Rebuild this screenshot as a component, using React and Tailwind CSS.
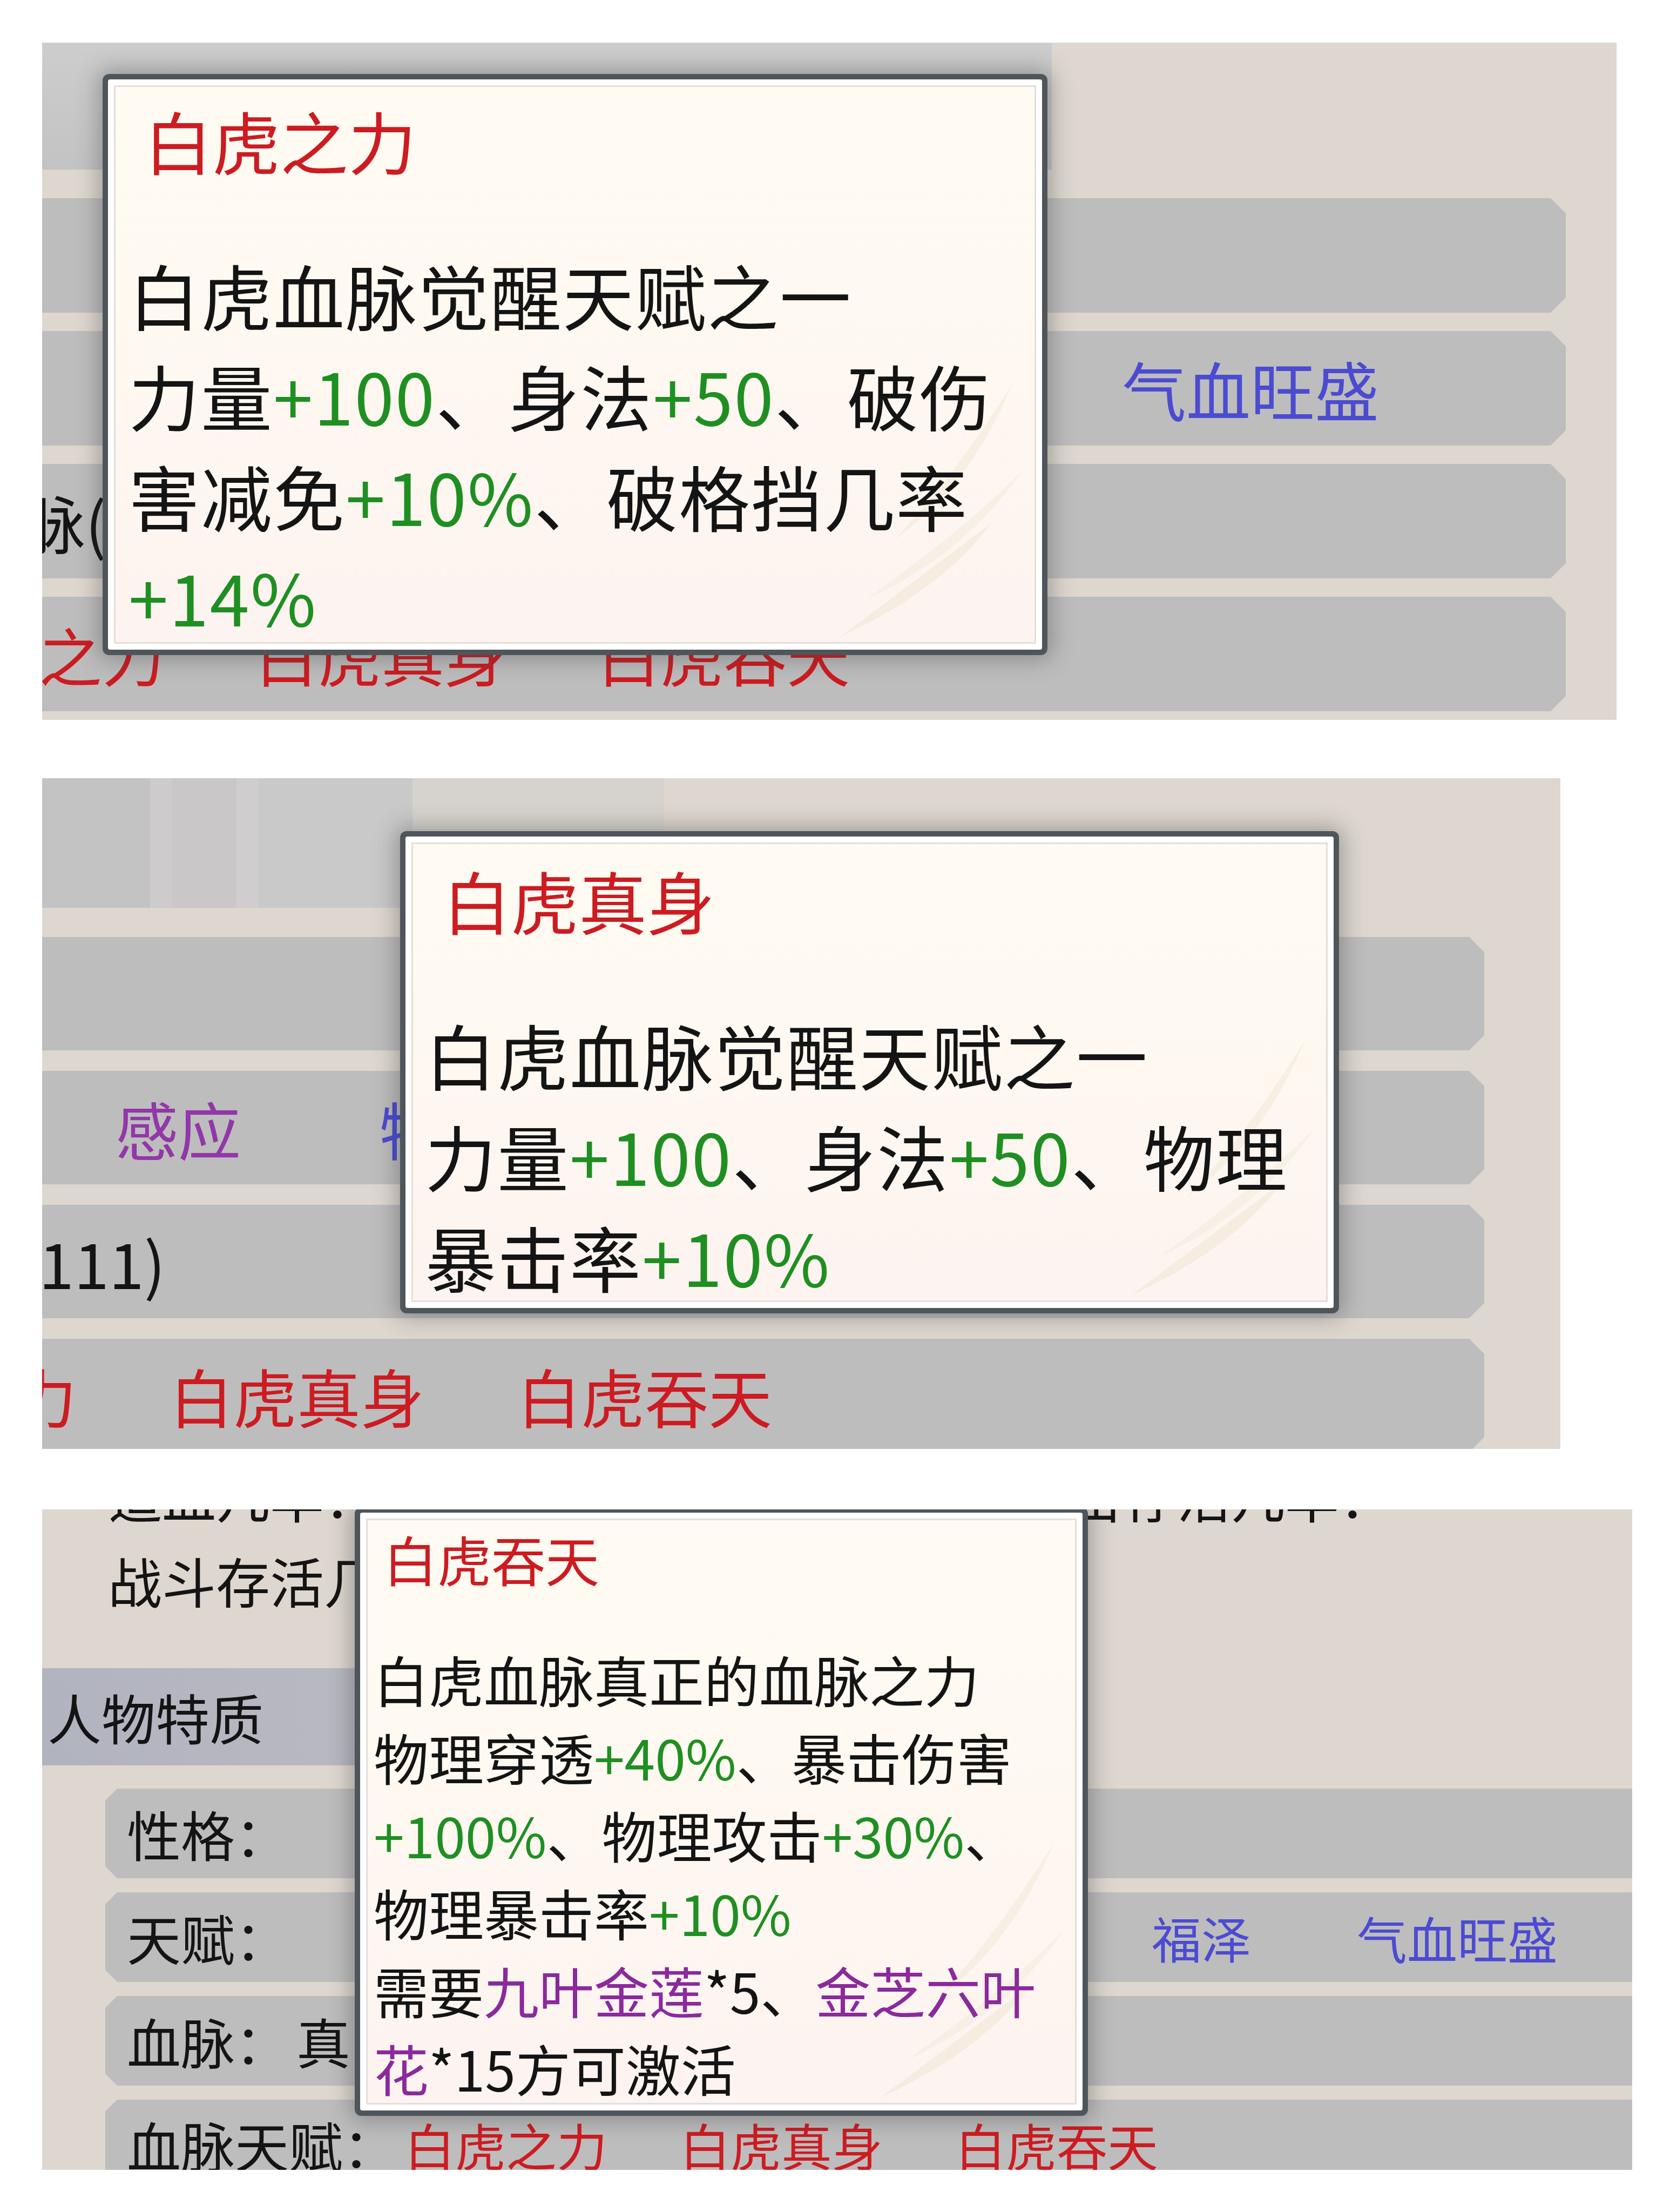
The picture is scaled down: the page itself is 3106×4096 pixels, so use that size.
import React from "react";

const G = ({ children }) => <span className="text-[#1f8f22]">{children}</span>;
const P = ({ children }) => <span className="text-[#8a2a9c]">{children}</span>;

const chamferRight =
  "[clip-path:polygon(0_0,calc(100%_-_28px)_0,100%_28px,100%_calc(100%_-_28px),calc(100%_-_28px)_100%,0_100%)]";
const chamferBoth =
  "[clip-path:polygon(22px_0,calc(100%_-_22px)_0,100%_22px,100%_calc(100%_-_22px),calc(100%_-_22px)_100%,22px_100%,0_calc(100%_-_22px),0_22px)]";

function Leaves() {
  // faint bamboo watermark in the lower right of the tooltip
  return (
    <svg className="absolute bottom-0 right-0 h-[520px] w-[560px] opacity-60" viewBox="0 0 560 520" fill="none">
      <path d="M520 40 C470 160 400 260 300 330 C380 250 450 150 520 40 Z" fill="#f2ebd9" />
      <path d="M540 200 C470 300 380 380 250 440 C360 360 450 290 540 200 Z" fill="#f3edde" />
      <path d="M480 300 C420 380 330 450 200 510 C320 420 400 360 480 300 Z" fill="#f1e9d6" />
    </svg>
  );
}

function Tooltip({ pos, title, titleCls, bodyCls, children }) {
  return (
    <div className={`absolute rounded-[12px] bg-[#4f565b] p-[10px] shadow-[0_0_40px_8px_rgba(50,50,50,0.35)] ${pos}`}>
      <div className="h-full w-full rounded-[4px] bg-white p-[11px]">
        <div className="relative h-full w-full overflow-hidden border-[3px] border-[#e3ded9] bg-gradient-to-b from-[#fffbf2] via-[#fef8f1] to-[#fdf3f0]">
          <Leaves />
          <div className={`relative whitespace-nowrap text-[#cc1c22] ${titleCls}`}>{title}</div>
          <div className={`relative whitespace-nowrap text-[#141414] ${bodyCls}`}>{children}</div>
        </div>
      </div>
    </div>
  );
}

function PanelOne() {
  return (
    <div className="relative h-[1254px] w-[2916px] overflow-hidden bg-[#ddd7cf]">
      <div className="flex h-[235px]">
        <div className="w-[1870px] bg-gradient-to-b from-[#cdcdcd] to-[#c3c3c3]" />
      </div>
      <div className="mt-[53px] flex flex-col gap-[34px]">
        <div className={`h-[212px] w-[2822px] bg-[#bdbdbd] ${chamferRight}`} />
        <div className={`flex h-[212px] w-[2822px] items-center bg-[#bdbdbd] pl-[2000px] ${chamferRight}`}>
          <span className="text-[119px] leading-none text-[#4b4bd2]">气血旺盛</span>
        </div>
        <div className={`flex h-[212px] w-[2822px] items-center bg-[#bdbdbd] ${chamferRight}`}>
          <span className="ml-[-152px] text-[116px] leading-none text-[#141414]">血脉(</span>
        </div>
        <div className={`flex h-[212px] w-[2822px] items-center gap-[166px] bg-[#bdbdbd] text-[117px] leading-none text-[#cc1c22] ${chamferRight}`}>
          <span className="ml-[-240px]">白虎之力</span>
          <span>白虎真身</span>
          <span>白虎吞天</span>
        </div>
      </div>

      <Tooltip
        pos="left-[112px] top-[58px] h-[1076px] w-[1750px]"
        title="白虎之力"
        titleCls="pl-[53px] text-[126px] leading-[196px]"
        bodyCls="mt-[95px] pl-[24px] text-[132px] leading-[186px] tracking-[2px]"
      >
        <div>白虎血脉觉醒天赋之一</div>
        <div>
          力量<G>+100</G>、身法<G>+50</G>、破伤
        </div>
        <div>
          害减免<G>+10%</G>、破格挡几率
        </div>
        <div>
          <G>+14%</G>
        </div>
      </Tooltip>
    </div>
  );
}

function PanelTwo() {
  return (
    <div className="relative mt-[108px] h-[1242px] w-[2812px] overflow-hidden bg-[#ddd7cf]">
      <div className="flex h-[240px]">
        <div className="flex w-[686px] bg-[#c6c5c6]">
          <div className="w-[200px] bg-[#c3c3c4]" />
          <div className="w-[40px] bg-[#cdcbcb]" />
          <div className="w-[120px] bg-[#c9c7c8]" />
          <div className="w-[40px] bg-[#cfcdcd]" />
          <div className="w-[286px] bg-[#cac9ca]" />
        </div>
        <div className="w-[466px] bg-[#d6d3cf]" />
      </div>
      <div className="mt-[54px] flex flex-col gap-[38px]">
        <div className={`h-[210px] w-[2671px] bg-[#bdbdbd] ${chamferRight}`} />
        <div className={`flex h-[210px] w-[2671px] items-center bg-[#bdbdbd] text-[116px] leading-none ${chamferRight}`}>
          <span className="ml-[136px] text-[#9237a8]">感应</span>
          <span className="ml-[256px] text-[#4b4bd2]">特质</span>
        </div>
        <div className={`flex h-[210px] w-[2671px] items-center bg-[#bdbdbd] ${chamferRight}`}>
          <span className="ml-[-6px] text-[117px] leading-none text-[#141414]">111)</span>
        </div>
        <div className={`flex h-[210px] w-[2671px] items-center gap-[172px] bg-[#bdbdbd] text-[118px] leading-none text-[#cc1c22] ${chamferRight}`}>
          <span className="ml-[-408px]">白虎之力</span>
          <span>白虎真身</span>
          <span>白虎吞天</span>
        </div>
      </div>

      <Tooltip
        pos="left-[663px] top-[98px] h-[893px] w-[1739px]"
        title="白虎真身"
        titleCls="pl-[55px] text-[126px] leading-[206px]"
        bodyCls="mt-[89px] pl-[22px] text-[132px] leading-[187px] tracking-[2px]"
      >
        <div>白虎血脉觉醒天赋之一</div>
        <div>
          力量<G>+100</G>、身法<G>+50</G>、物理
        </div>
        <div>
          暴击率<G>+10%</G>
        </div>
      </Tooltip>
    </div>
  );
}

function PanelThree() {
  return (
    <div className="relative mt-[112px] h-[1223px] w-[2945px] overflow-hidden bg-[#ddd7cf] text-[#141414]">
      <div className="mt-[-77px] flex h-[100px] text-[100px] leading-[100px]">
        <span className="ml-[122px]">造血几率：</span>
        <span className="ml-[1180px]">暴击存活几率：</span>
      </div>
      <div className="mt-[58px] pl-[122px] text-[100px] leading-[100px]">战斗存活几率</div>
      <div className="mt-[113px] flex h-[180px] w-[1500px] items-center bg-gradient-to-r from-[#b1b3bf] to-[#c3c1c4] pl-[10px] text-[100px] leading-none">
        人物特质
      </div>
      <div className="mt-[43px] flex flex-col gap-[26px]">
        <div className={`ml-[117px] flex h-[166px] w-[2900px] items-center bg-[#bdbdbd] pl-[40px] text-[100px] leading-none ${chamferBoth}`}>
          性格：
        </div>
        <div className={`ml-[117px] flex h-[166px] w-[2900px] items-center bg-[#bdbdbd] pl-[40px] text-[100px] leading-none ${chamferBoth}`}>
          <span>天赋：</span>
          <span className="ml-[1598px] text-[92px] text-[#4b4bd2]">福泽</span>
          <span className="ml-[196px] text-[93px] text-[#4b4bd2]">气血旺盛</span>
        </div>
        <div className={`ml-[117px] flex h-[166px] w-[2900px] items-center bg-[#bdbdbd] pl-[40px] text-[100px] leading-none ${chamferBoth}`}>
          <span>血脉：</span>
          <span className="ml-[14px]">真</span>
        </div>
        <div className={`ml-[117px] flex h-[166px] w-[2900px] items-center bg-[#bdbdbd] pl-[40px] text-[100px] leading-none ${chamferBoth}`}>
          <span>血脉天赋：</span>
          <span className="ml-[14px] flex gap-[134px] text-[94px] text-[#cc1c22]">
            <span>白虎之力</span>
            <span>白虎真身</span>
            <span>白虎吞天</span>
          </span>
        </div>
      </div>

      <Tooltip
        pos="left-[579px] top-[-4px] h-[1127px] w-[1358px]"
        title="白虎吞天"
        titleCls="pl-[29px] text-[100px] leading-[142px]"
        bodyCls="mt-[80px] pl-[11px] text-[102px] leading-[144px]"
      >
        <div>白虎血脉真正的血脉之力</div>
        <div>
          物理穿透<G>+40%</G>、暴击伤害
        </div>
        <div>
          <G>+100%</G>、物理攻击<G>+30%</G>、
        </div>
        <div>
          物理暴击率<G>+10%</G>
        </div>
        <div>
          需要<P>九叶金莲</P>*5、<P>金芝六叶</P>
        </div>
        <div>
          <P>花</P>*15方可激活
        </div>
      </Tooltip>
    </div>
  );
}

export default function App() {
  return (
    <div className="h-[4096px] w-[3106px] overflow-hidden bg-white pl-[78px] pt-[79px] font-['Noto_Sans_CJK_SC','Noto_Sans',sans-serif]">
      <PanelOne />
      <PanelTwo />
      <PanelThree />
    </div>
  );
}
